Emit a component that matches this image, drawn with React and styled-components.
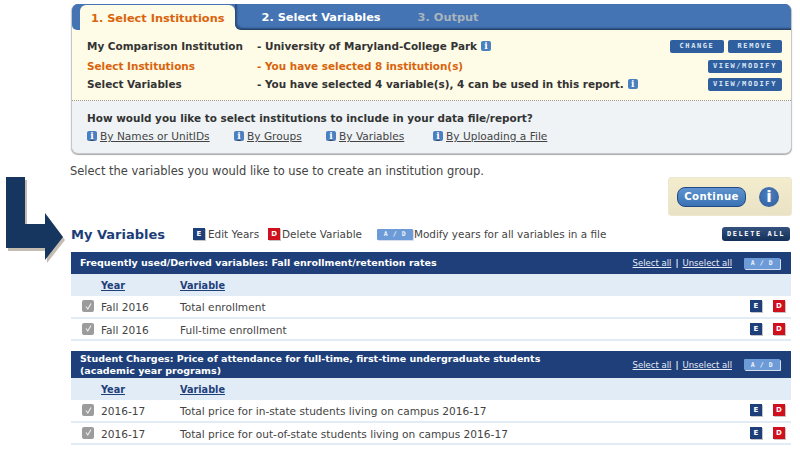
import React from 'react';
import styled, { createGlobalStyle } from 'styled-components';

const GlobalStyle = createGlobalStyle`
  html, body { margin: 0; padding: 0; background: #fff; }
  body { font-family: "DejaVu Sans", Verdana, sans-serif; color: #444; overflow: hidden; }
`;

const Page = styled.div`
  position: relative;
  width: 800px;
  height: 454px;
  box-sizing: border-box;
  padding: 4px 8px 0 71px;
  overflow: hidden;
`;

const ArrowWrap = styled.div`
  position: absolute;
  left: 6px;
  top: 176px;
`;

const Panel = styled.div`
  height: 150px;
  border-radius: 7px;
  overflow: hidden;
  border: 1px solid #c4c8cc;
  border-top: 0;
  box-sizing: border-box;
  background: #eff3f6;
  box-shadow: 0 1px 1px #aaa;
`;

const TabBar = styled.div`
  height: 26px;
  background: linear-gradient(#4474b3 0 50%, #fefbe6 50%);
  display: flex;
  align-items: flex-end;
`;

const LeftCap = styled.div`
  width: 8px;
  height: 26px;
  flex: none;
  background: #4474b3;
  border-bottom-left-radius: 5px;
`;

const ActiveTab = styled.div`
  height: 25px;
  flex: none;
  box-sizing: border-box;
  padding: 0 11px;
  display: flex;
  align-items: center;
  font-size: 11.35px;
  font-weight: 700;
  white-space: nowrap;
  color: #d9640c;
  background: #fefbe6;
  border-radius: 6px 6px 0 0;
`;

const TabRest = styled.div`
  flex: 1;
  height: 26px;
  box-sizing: border-box;
  background: #4474b3;
  border-bottom: 1px solid #234268;
  border-bottom-left-radius: 6px;
  box-shadow: inset 2px -1px 2px #2a4c7c;
  display: flex;
  align-items: center;
  padding-top: 1px;
`;

const Tab = styled.div`
  margin-left: ${p => p.$ml}px;
  font-size: 11.35px;
  font-weight: 700;
  white-space: nowrap;
  color: ${p => (p.$disabled ? '#a9b3bd' : '#fff')};
`;

const SummaryBox = styled.div`
  height: 71px;
  box-sizing: border-box;
  background: #fefbe6;
  border-bottom: 1px dotted #999;
  padding: 5px 9px 0 15px;
  display: flex;
  flex-direction: column;
`;

const SummaryRow = styled.div`
  height: ${p => p.$h || 18}px;
  display: flex;
  align-items: center;
  font-size: 10.45px;
  font-weight: 700;
  color: ${p => (p.$accent ? '#d9640c' : '#333')};
`;

const SummaryLabel = styled.span`
  width: 170px;
  flex: none;
  white-space: nowrap;
`;

const SummaryValue = styled.span`
  flex: 1;
  display: flex;
  align-items: center;
  gap: 4px;
  white-space: nowrap;
`;

const SummaryActions = styled.span`
  display: flex;
  gap: 4px;
`;

const SmallButton = styled.span`
  width: ${p => p.$w}px;
  height: 13px;
  display: flex;
  align-items: center;
  justify-content: center;
  border-radius: 2px;
  background: #2f5f9f;
  color: #dfe8f5;
  font-family: "DejaVu Sans Mono", monospace;
  font-size: 7px;
  font-weight: 700;
  letter-spacing: 1.6px;
`;

const HowBox = styled.div`
  padding: 9px 0 0 15px;
`;

const HowTitle = styled.div`
  font-size: 10.45px;
  font-weight: 700;
  color: #333;
  line-height: 16px;
`;

const HowLinks = styled.div`
  display: flex;
  margin-top: 2px;
`;

const HowLink = styled.span`
  width: ${p => p.$w}px;
  flex: none;
  display: flex;
  align-items: center;
  gap: 3px;
  font-size: 10.6px;
  line-height: 16px;
  color: #444;
  text-decoration: underline;
  white-space: nowrap;
`;

const Intro = styled.div`
  margin-top: 11px;
  margin-left: -1px;
  font-size: 11.47px;
  line-height: 12px;
  color: #444;
`;

const ContinueRow = styled.div`
  display: flex;
  justify-content: flex-end;
`;

const ContinueBox = styled.div`
  width: 124px;
  height: 39px;
  box-sizing: border-box;
  border: 1px solid #eee7cf;
  border-radius: 3px;
  background: linear-gradient(#f3eccd, #eae2c4);
  display: flex;
  align-items: center;
  padding: 0 0 0 8px;
  gap: 13px;
`;

const ContinueButton = styled.span`
  width: 69px;
  height: 20px;
  box-sizing: border-box;
  border: 1px solid #204a85;
  border-radius: 8px;
  background: linear-gradient(#5f93cf, #3a72b4);
  color: #fff;
  font-size: 10.2px;
  font-weight: 700;
  letter-spacing: 0.4px;
  display: flex;
  align-items: center;
  justify-content: center;
`;

const BigInfo = styled.span`
  width: 20px;
  height: 20px;
  border-radius: 50%;
  background: radial-gradient(circle at 50% 40%, #4d7fbf, #2f5c9c);
  color: #fff;
  font-size: 16px;
  font-weight: 700;
  display: flex;
  align-items: center;
  justify-content: center;
  font-family: "DejaVu Sans", sans-serif;
`;

const HeadingRow = styled.div`
  height: 36px;
  display: flex;
  align-items: center;
  font-size: 10.45px;
  color: #444;
`;

const Heading = styled.h2`
  margin: 0;
  width: 122px;
  font-size: 13px;
  font-weight: 700;
  color: #1c3e78;
  white-space: nowrap;
`;

const Legend = styled.span`
  display: flex;
  align-items: center;
  gap: ${p => p.$gap || 2}px;
  margin-right: ${p => p.$mr || 0}px;
  white-space: nowrap;
`;

const DeleteAll = styled.span`
  margin-left: auto;
  margin-right: 2px;
  width: 68px;
  height: 14px;
  border-radius: 3px;
  background: linear-gradient(#35527e, #12305a);
  color: #fff;
  font-family: "DejaVu Sans Mono", monospace;
  font-size: 7px;
  font-weight: 700;
  letter-spacing: 1.6px;
  display: flex;
  align-items: center;
  justify-content: center;
`;

const Section = styled.section`
  margin-right: 1px;
  margin-bottom: ${p => p.$mb || 0}px;
`;

const SectionHead = styled.div`
  height: ${p => p.$h}px;
  box-sizing: border-box;
  background: #1e3f7a;
  display: flex;
  align-items: center;
  padding: 0 11px 0 9px;
  color: #fff;
`;

const SectionTitle = styled.div`
  flex: 1;
  font-size: 9.5px;
  font-weight: 700;
  line-height: 11.5px;
`;

const SelectLinks = styled.div`
  display: flex;
  align-items: center;
  gap: 4px;
  font-size: 8.5px;
  color: #e6ecf5;
  white-space: nowrap;
  margin-right: 12px;
  u { text-underline-offset: 1px; }
`;

const AdButton = styled.span`
  width: 36px;
  height: 11px;
  display: inline-flex;
  align-items: center;
  justify-content: center;
  background: #6d9bd8;
  border-radius: 1px;
  box-shadow: 1px 1px 0 #d5deec;
  color: #eef3fb;
  font-family: "DejaVu Sans Mono", monospace;
  font-size: 6.5px;
  font-weight: 700;
  letter-spacing: 0.6px;
  white-space: nowrap;
`;

const ColHead = styled.div`
  height: 22px;
  background: #e2ecf6;
  display: flex;
  align-items: center;
  padding-left: 30px;
  font-size: 9.7px;
  font-weight: 700;
  color: #1e3f7a;
  text-decoration: underline;
`;

const YearCol = styled.span`
  width: 79px;
  flex: none;
`;

const Row = styled.div`
  height: 22.5px;
  box-sizing: border-box;
  border-bottom: 2px solid #e2ecf6;
  display: flex;
  align-items: center;
  padding: 0 6px 0 11px;
  font-size: 10.6px;
  color: #444;
`;

const Check = styled.span`
  width: 12px;
  height: 12px;
  flex: none;
  border-radius: 2px;
  background: #9c9c9c;
  color: #eee;
  display: flex;
  align-items: center;
  justify-content: center;
  margin-right: 7px;
`;

const RowYear = styled(YearCol)`
  padding-top: 2px;
`;

const RowText = styled.span`
  flex: 1;
  padding-top: 2px;
  white-space: nowrap;
`;

const RowIcons = styled.span`
  display: flex;
  gap: 11px;
`;

const KeyIcon = styled.span`
  width: 12px;
  height: 12px;
  background: ${p => (p.$red ? '#d0101c' : '#1e3f7a')};
  box-shadow: 1px 1px 0 #c4c4c4;
  color: #fff;
  font-size: 7px;
  font-weight: 700;
  display: inline-flex;
  align-items: center;
  justify-content: center;
  flex: none;
`;

const InfoMark = styled.span`
  width: 10px;
  height: 10px;
  flex: none;
  border-radius: 2px;
  background: #4a7fc0;
  color: #fff;
  font-family: "DejaVu Serif", serif;
  font-size: 9px;
  font-weight: 700;
  display: inline-flex;
  align-items: center;
  justify-content: center;
  text-decoration: none;
`;

const Arrow = () => (
  <svg width="62" height="90" viewBox="0 0 62 90">
    <path d="M0 1H19V48H39V37L57 61L39 84V72H0Z" fill="#c4bcb0" transform="translate(2 3)" />
    <path d="M0 1H19V48H39V37L57 61L39 84V72H0Z" fill="#17365f" />
  </svg>
);

const tick = (
  <svg width="9" height="9" viewBox="0 0 9 9">
    <path d="M2 4.5L3.8 7L7 1.5" fill="none" stroke="#eee" strokeWidth="1.1" />
  </svg>
);

const RowItem = ({ year, name }) => (
  <Row>
    <Check>{tick}</Check>
    <RowYear>{year}</RowYear>
    <RowText>{name}</RowText>
    <RowIcons>
      <KeyIcon>E</KeyIcon>
      <KeyIcon $red>D</KeyIcon>
    </RowIcons>
  </Row>
);

const VariableSection = ({ title, headHeight, rows, mb }) => (
  <Section $mb={mb}>
    <SectionHead $h={headHeight}>
      <SectionTitle>{title}</SectionTitle>
      <SelectLinks>
        <u>Select all</u>
        <b>|</b>
        <u>Unselect all</u>
      </SelectLinks>
      <AdButton>A / D</AdButton>
    </SectionHead>
    <ColHead>
      <YearCol>Year</YearCol>
      <span>Variable</span>
    </ColHead>
    {rows.map(r => (
      <RowItem key={r.name} year={r.year} name={r.name} />
    ))}
  </Section>
);

export default function App() {
  return (
    <Page>
      <GlobalStyle />
      <ArrowWrap>
        <Arrow />
      </ArrowWrap>
      <Panel>
        <TabBar>
          <LeftCap />
          <ActiveTab>1. Select Institutions</ActiveTab>
          <TabRest>
            <Tab $ml={26}>2. Select Variables</Tab>
            <Tab $disabled $ml={37}>3. Output</Tab>
          </TabRest>
        </TabBar>
        <SummaryBox>
          <SummaryRow $h={22}>
            <SummaryLabel>My Comparison Institution</SummaryLabel>
            <SummaryValue>
              - University of Maryland-College Park <InfoMark>i</InfoMark>
            </SummaryValue>
            <SummaryActions>
              <SmallButton $w={54}>CHANGE</SmallButton>
              <SmallButton $w={54}>REMOVE</SmallButton>
            </SummaryActions>
          </SummaryRow>
          <SummaryRow $accent>
            <SummaryLabel>Select Institutions</SummaryLabel>
            <SummaryValue>- You have selected 8 institution(s)</SummaryValue>
            <SmallButton $w={74}>VIEW/MODIFY</SmallButton>
          </SummaryRow>
          <SummaryRow>
            <SummaryLabel>Select Variables</SummaryLabel>
            <SummaryValue>
              - You have selected 4 variable(s), 4 can be used in this report. <InfoMark>i</InfoMark>
            </SummaryValue>
            <SmallButton $w={74}>VIEW/MODIFY</SmallButton>
          </SummaryRow>
        </SummaryBox>
        <HowBox>
          <HowTitle>How would you like to select institutions to include in your data file/report?</HowTitle>
          <HowLinks>
            <HowLink $w={147}><InfoMark>i</InfoMark>By Names or UnitIDs</HowLink>
            <HowLink $w={92}><InfoMark>i</InfoMark>By Groups</HowLink>
            <HowLink $w={107}><InfoMark>i</InfoMark>By Variables</HowLink>
            <HowLink $w={160}><InfoMark>i</InfoMark>By Uploading a File</HowLink>
          </HowLinks>
        </HowBox>
      </Panel>
      <Intro>Select the variables you would like to use to create an institution group.</Intro>
      <ContinueRow>
        <ContinueBox>
          <ContinueButton>Continue</ContinueButton>
          <BigInfo>i</BigInfo>
        </ContinueBox>
      </ContinueRow>
      <HeadingRow>
        <Heading>My Variables</Heading>
        <Legend $gap={3} $mr={9}><KeyIcon>E</KeyIcon>Edit Years</Legend>
        <Legend $mr={15}><KeyIcon $red>D</KeyIcon>Delete Variable</Legend>
        <Legend $gap={1}><AdButton>A / D</AdButton>Modify years for all variables in a file</Legend>
        <DeleteAll>DELETE ALL</DeleteAll>
      </HeadingRow>
      <VariableSection
        title="Frequently used/Derived variables: Fall enrollment/retention rates"
        headHeight={22}
        mb={10}
        rows={[
          { year: 'Fall 2016', name: 'Total enrollment' },
          { year: 'Fall 2016', name: 'Full-time enrollment' },
        ]}
      />
      <VariableSection
        title={<>Student Charges: Price of attendance for full-time, first-time undergraduate students<br />(academic year programs)</>}
        headHeight={27}
        rows={[
          { year: '2016-17', name: 'Total price for in-state students living on campus 2016-17' },
          { year: '2016-17', name: 'Total price for out-of-state students living on campus 2016-17' },
        ]}
      />
    </Page>
  );
}
